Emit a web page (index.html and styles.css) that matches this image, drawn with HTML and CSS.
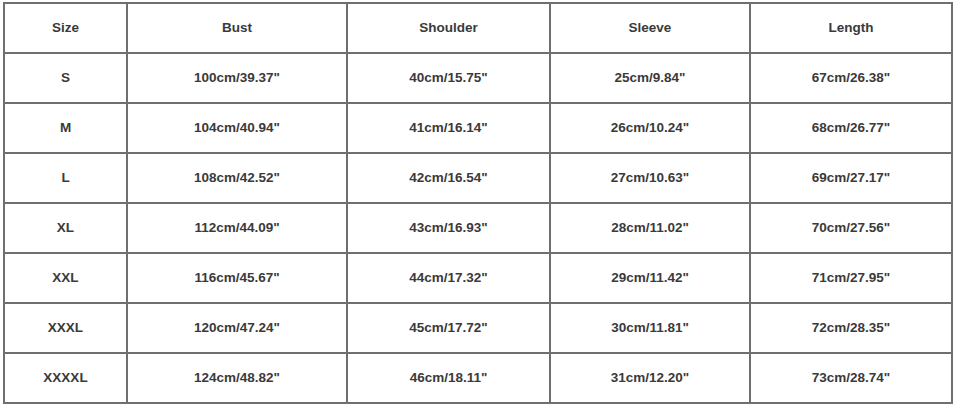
FILE: index.html
```html
<!DOCTYPE html>
<html>
<head>
<meta charset="utf-8">
<link rel="stylesheet" href="styles.css">
</head>
<body>
<table class="size-table">
  <colgroup>
    <col class="c1"><col class="c2"><col class="c3"><col class="c4"><col class="c5">
  </colgroup>
  <tr><td>Size</td><td>Bust</td><td>Shoulder</td><td>Sleeve</td><td>Length</td></tr>
  <tr><td>S</td><td>100cm/39.37"</td><td>40cm/15.75"</td><td>25cm/9.84"</td><td>67cm/26.38"</td></tr>
  <tr><td>M</td><td>104cm/40.94"</td><td>41cm/16.14"</td><td>26cm/10.24"</td><td>68cm/26.77"</td></tr>
  <tr><td>L</td><td>108cm/42.52"</td><td>42cm/16.54"</td><td>27cm/10.63"</td><td>69cm/27.17"</td></tr>
  <tr><td>XL</td><td>112cm/44.09"</td><td>43cm/16.93"</td><td>28cm/11.02"</td><td>70cm/27.56"</td></tr>
  <tr><td>XXL</td><td>116cm/45.67"</td><td>44cm/17.32"</td><td>29cm/11.42"</td><td>71cm/27.95"</td></tr>
  <tr><td>XXXL</td><td>120cm/47.24"</td><td>45cm/17.72"</td><td>30cm/11.81"</td><td>72cm/28.35"</td></tr>
  <tr><td>XXXXL</td><td>124cm/48.82"</td><td>46cm/18.11"</td><td>31cm/12.20"</td><td>73cm/28.74"</td></tr>
</table>
</body>
</html>
```
FILE: styles.css
```css
html, body {
  margin: 0;
  padding: 0;
  background: #ffffff;
}
body {
  padding: 2px 0 0 3px;
  font-family: "Liberation Sans", Arial, sans-serif;
}
.size-table {
  border-collapse: collapse;
  table-layout: fixed;
  width: 950px;
}
.size-table td {
  border: 2px solid #6f6f6f;
  height: 46px;
  padding: 0 0 2px 0;
  text-align: center;
  vertical-align: middle;
  font-size: 13.5px;
  font-weight: bold;
  color: #3a3a3a;
}
.c1 { width: 123px; }
.c2 { width: 220px; }
.c3 { width: 203px; }
.c4 { width: 200px; }
.c5 { width: 202px; }
```
